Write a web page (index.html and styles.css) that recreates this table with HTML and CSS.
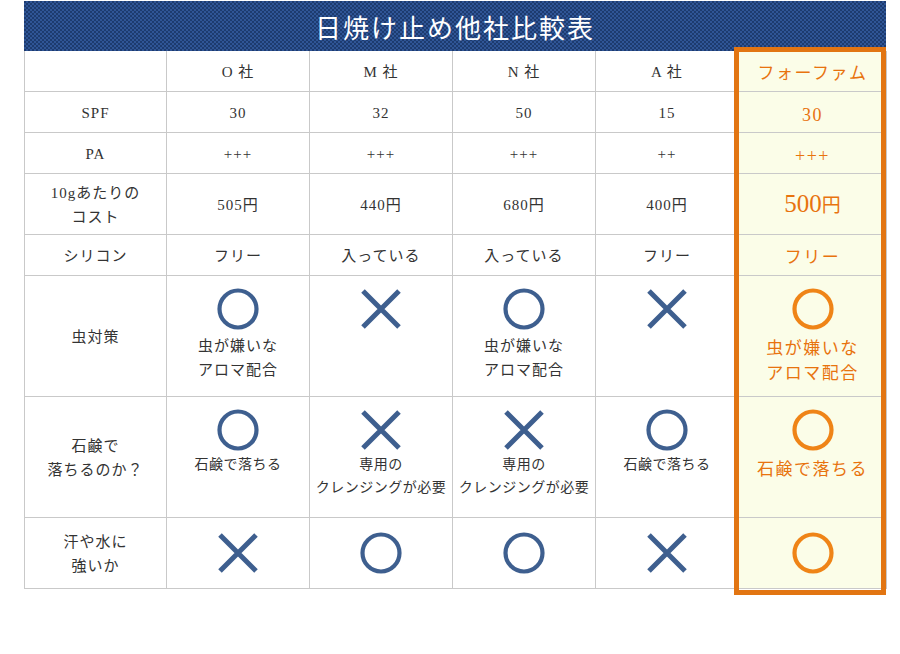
FILE: index.html
```html
<!DOCTYPE html>
<html lang="ja">
<head>
<meta charset="utf-8">
<title>日焼け止め他社比較表</title>
<link rel="stylesheet" href="styles.css">
</head>
<body>
<div class="wrap">
  <h1 class="title">日焼け止め他社比較表</h1>
  <div class="grid">
    <div class="c lab"></div>
    <div class="c">O 社</div>
    <div class="c">M 社</div>
    <div class="c">N 社</div>
    <div class="c">A 社</div>
    <div class="c us">フォーファム</div>

    <div class="c lab">SPF</div>
    <div class="c">30</div>
    <div class="c">32</div>
    <div class="c">50</div>
    <div class="c">15</div>
    <div class="c us num">30</div>

    <div class="c lab">PA</div>
    <div class="c">+++</div>
    <div class="c">+++</div>
    <div class="c">+++</div>
    <div class="c">++</div>
    <div class="c us num">+++</div>

    <div class="c lab two">10gあたりの<br>コスト</div>
    <div class="c">505円</div>
    <div class="c">440円</div>
    <div class="c">680円</div>
    <div class="c">400円</div>
    <div class="c us"><span class="price">500<span class="yen">円</span></span></div>

    <div class="c lab">シリコン</div>
    <div class="c">フリー</div>
    <div class="c">入っている</div>
    <div class="c">入っている</div>
    <div class="c">フリー</div>
    <div class="c us">フリー</div>

    <div class="c lab">虫対策</div>
    <div class="c top"><svg class="ic" viewBox="0 0 42 42"><circle cx="21" cy="21" r="18.5" class="o"/></svg><p class="note">虫が嫌いな<br>アロマ配合</p></div>
    <div class="c top"><svg class="ic" viewBox="0 0 42 42"><path d="M3 3L39 39M39 3L3 39" class="x"/></svg></div>
    <div class="c top"><svg class="ic" viewBox="0 0 42 42"><circle cx="21" cy="21" r="18.5" class="o"/></svg><p class="note">虫が嫌いな<br>アロマ配合</p></div>
    <div class="c top"><svg class="ic" viewBox="0 0 42 42"><path d="M3 3L39 39M39 3L3 39" class="x"/></svg></div>
    <div class="c top us"><svg class="ic" viewBox="0 0 42 42"><circle cx="21" cy="21" r="18.5" class="o"/></svg><p class="note">虫が嫌いな<br>アロマ配合</p></div>

    <div class="c lab two">石鹸で<br>落ちるのか？</div>
    <div class="c top"><svg class="ic" viewBox="0 0 42 42"><circle cx="21" cy="21" r="18.5" class="o"/></svg><p class="note sm">石鹸で落ちる</p></div>
    <div class="c top"><svg class="ic" viewBox="0 0 42 42"><path d="M3 3L39 39M39 3L3 39" class="x"/></svg><p class="note sm">専用の<br>クレンジングが必要</p></div>
    <div class="c top"><svg class="ic" viewBox="0 0 42 42"><path d="M3 3L39 39M39 3L3 39" class="x"/></svg><p class="note sm">専用の<br>クレンジングが必要</p></div>
    <div class="c top"><svg class="ic" viewBox="0 0 42 42"><circle cx="21" cy="21" r="18.5" class="o"/></svg><p class="note sm">石鹸で落ちる</p></div>
    <div class="c top us"><svg class="ic" viewBox="0 0 42 42"><circle cx="21" cy="21" r="18.5" class="o"/></svg><p class="note">石鹸で落ちる</p></div>

    <div class="c lab two">汗や水に<br>強いか</div>
    <div class="c icell"><svg class="ic" viewBox="0 0 42 42"><path d="M3 3L39 39M39 3L3 39" class="x"/></svg></div>
    <div class="c icell"><svg class="ic" viewBox="0 0 42 42"><circle cx="21" cy="21" r="18.5" class="o"/></svg></div>
    <div class="c icell"><svg class="ic" viewBox="0 0 42 42"><circle cx="21" cy="21" r="18.5" class="o"/></svg></div>
    <div class="c icell"><svg class="ic" viewBox="0 0 42 42"><path d="M3 3L39 39M39 3L3 39" class="x"/></svg></div>
    <div class="c us icell"><svg class="ic" viewBox="0 0 42 42"><circle cx="21" cy="21" r="18.5" class="o"/></svg></div>
  </div>
  <div class="frame"></div>
</div>
</body>
</html>
```

FILE: styles.css
```css
html, body {
  margin: 0;
  padding: 0;
  background: #ffffff;
}
body {
  font-family: "Liberation Serif", "Noto Sans CJK JP", serif;
  color: #333333;
  min-height: 654px;
}
.wrap {
  position: relative;
  width: 862px;
  margin: 1px 0 0 24px;
  padding-bottom: 10px;
}
.title {
  margin: 0;
  height: 50px;
  display: flex;
  align-items: center;
  justify-content: center;
  font-size: 26px;
  font-weight: normal;
  letter-spacing: 2px;
  color: #ffffff;
  background-color: #1d3b6f;
  background-image:
    linear-gradient(45deg, #2f5596 25%, transparent 25%, transparent 75%, #2f5596 75%),
    linear-gradient(45deg, #2f5596 25%, transparent 25%, transparent 75%, #2f5596 75%);
  background-size: 4px 4px;
  background-position: 0 0, 2px 2px;
}
.grid {
  display: grid;
  grid-template-columns: 142px 143px 143px 143px 143px 148px;
  grid-template-rows: 41px 41px 41px 61px 41px 121px 121px 71px;
  border-left: 1px solid #c9c9c9;
  box-sizing: border-box;
}
.c {
  box-sizing: border-box;
  border-right: 1px solid #c9c9c9;
  border-bottom: 1px solid #c9c9c9;
  display: flex;
  flex-direction: column;
  align-items: center;
  justify-content: center;
  text-align: center;
  font-size: 15px;
  letter-spacing: 1px;
  line-height: 24px;
  padding-top: 1px;
}
.c.top {
  justify-content: flex-start;
  padding-top: 12px;
}
.us {
  background: #fbfde8;
  color: #e8730e;
  font-size: 17px;
  letter-spacing: 1.5px;
  padding-top: 5px;
}
.us.num {
  font-size: 18px;
}
.c.icell {
  padding-top: 0;
}
.price {
  display: flex;
  align-items: baseline;
  font-size: 25px;
  letter-spacing: 0;
  margin-top: -3px;
}
.yen {
  font-size: 19px;
}
.ic {
  width: 42px;
  height: 42px;
  display: block;
  flex-shrink: 0;
}
.o {
  fill: none;
  stroke: #3e5f8f;
  stroke-width: 4.2;
}
.x {
  fill: none;
  stroke: #3e5f8f;
  stroke-width: 5;
}
.us .o {
  stroke: #ef8417;
}
.note {
  margin: 4px 0 0;
  line-height: 24px;
}
.us .note {
  margin-top: 6px;
  line-height: 25px;
}
.note.sm {
  font-size: 14px;
  letter-spacing: 0.5px;
  line-height: 23px;
  margin-top: 2px;
}
.frame {
  position: absolute;
  left: 710px;
  top: 46px;
  width: 152px;
  height: 548px;
  box-sizing: border-box;
  border: 5px solid #e27512;
  pointer-events: none;
}
```
